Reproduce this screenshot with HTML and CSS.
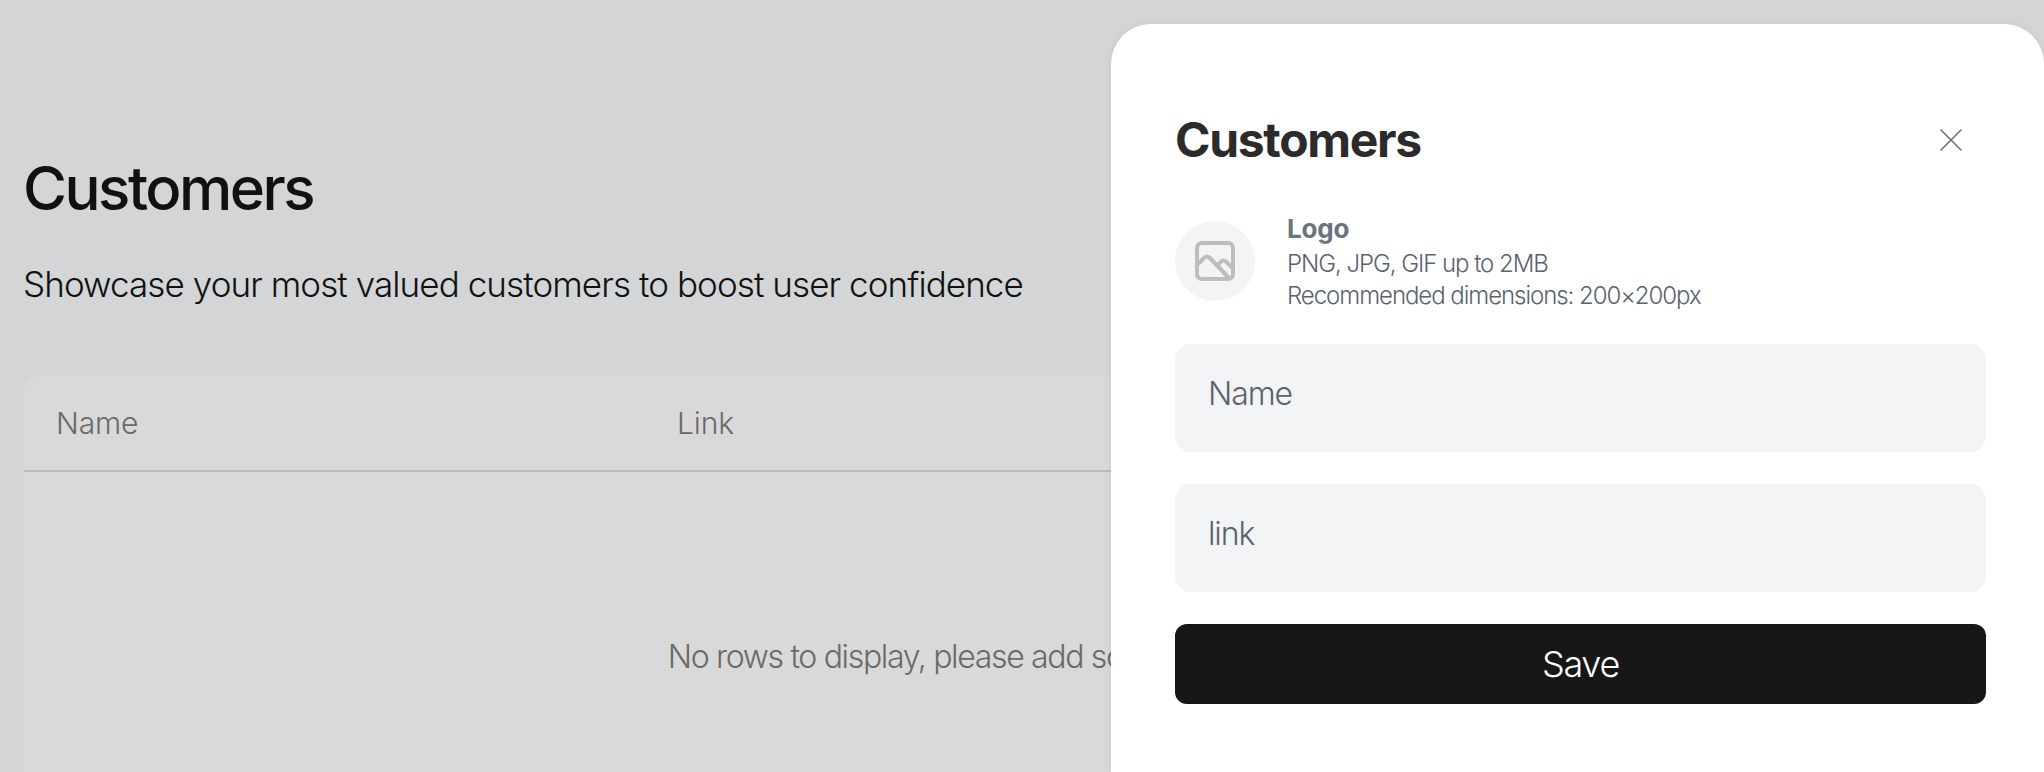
FILE: index.html
```html
<!DOCTYPE html>
<html lang="en">
<head>
    <meta charset="UTF-8">
    <title>Customers</title>
    <link rel="stylesheet" href="styles.css">
</head>
<body>
    <div class="page">
        <h1 class="page-title">Customers</h1>
        <p class="page-subtitle">Showcase your most valued customers to boost user confidence</p>
        <div class="table">
            <div class="table-header">
                <div class="table-col">Name</div>
                <div class="table-col">Link</div>
            </div>
            <div class="table-empty">No rows to display, please add some customers</div>
        </div>
    </div>

    <div class="drawer">
        <div class="drawer-header">
            <h2 class="drawer-title">Customers</h2>
            <button class="close-btn" aria-label="Close">
                <svg width="24" height="24" viewBox="0 0 24 24" fill="none" stroke="#6b6b6b" stroke-width="1.5" stroke-linecap="round">
                    <path d="M2 2l20 20M22 2L2 22"/>
                </svg>
            </button>
        </div>

        <div class="logo-row">
            <div class="logo-circle">
                <svg width="40" height="40" viewBox="0 0 40 40" fill="none" stroke="#bdbdbd" stroke-width="4" stroke-linejoin="round" stroke-linecap="round">
                    <rect x="2" y="2" width="36" height="36" rx="5"/>
                    <path d="M3 23l6.500-6.500q2.500-2 5 0l19 20"/>
                    <path d="M23 24l3-3.500q2.500-2 5 0l7 7"/>
                </svg>
            </div>
            <div class="logo-text">
                <div class="logo-label">Logo</div>
                <div class="logo-hint">PNG, JPG, GIF up to 2MB</div>
                <div class="logo-hint">Recommended dimensions: 200×200px</div>
            </div>
        </div>

        <input class="field" type="text" placeholder="Name">
        <input class="field" type="text" placeholder="link">
        <button class="save-btn">Save</button>
    </div>
</body>
</html>
```

FILE: styles.css
```css
* {
    margin: 0;
    padding: 0;
    box-sizing: border-box;
}

body {
    font-family: 'Inter', 'Liberation Sans', sans-serif;
    background: #d4d5d7;
    height: 100vh;
    overflow: hidden;
}

.page {
    padding: 152px 24px 0;
}

.page-title {
    margin-left: -1px;
    font-size: 60px;
    line-height: 72px;
    font-weight: 500;
    letter-spacing: -2.5px;
    color: #111;
}

.page-subtitle {
    margin-top: 38px;
    margin-left: -1px;
    font-size: 35px;
    line-height: 44px;
    font-weight: 300;
    letter-spacing: -0.92px;
    color: #111;
}

.table {
    margin-top: 70px;
    background: #d9d9d9;
    border-radius: 16px 16px 0 0;
    height: 396px;
}

.table-header {
    display: grid;
    grid-template-columns: 621px 1fr;
    height: 96px;
    padding: 0 32px;
    align-items: center;
    border-bottom: 2px solid #bcbcbc;
}

.table-col {
    font-size: 30px;
    font-weight: 300;
    letter-spacing: -0.15px;
    color: #6a6a6a;
}

.table-empty {
    margin-top: 163px;
    padding-right: 57px;
    text-align: center;
    font-size: 32px;
    line-height: 44px;
    font-weight: 300;
    letter-spacing: -1.33px;
    color: #6a6a6a;
}

.drawer {
    position: absolute;
    top: 24px;
    left: 1111px;
    right: 0;
    bottom: 0;
    background: #fff;
    border-radius: 40px 40px 0 0;
    padding: 86px 58px 0 64px;
    box-shadow: 0 0 10px rgba(0, 0, 0, 0.06);
}

.drawer-header {
    display: flex;
    justify-content: space-between;
    align-items: center;
    height: 60px;
}

.drawer-title {
    font-size: 48px;
    line-height: 60px;
    font-weight: 700;
    letter-spacing: -1.3px;
    color: #2b2b2b;
}

.close-btn {
    display: flex;
    background: none;
    border: none;
    margin-right: 23px;
}

.logo-row {
    display: flex;
    align-items: center;
    gap: 32px;
    margin-top: 39px;
    margin-bottom: 32px;
}

.logo-circle {
    width: 80px;
    height: 80px;
    border-radius: 50%;
    background: #f3f4f6;
    display: flex;
    align-items: center;
    justify-content: center;
}

.logo-label {
    font-size: 26px;
    line-height: 39px;
    font-weight: 700;
    letter-spacing: -0.2px;
    color: #6b7280;
}

.logo-hint {
    font-size: 24px;
    line-height: 32px;
    font-weight: 300;
    letter-spacing: -1.05px;
    color: #5b6270;
}

.field {
    display: block;
    width: 100%;
    height: 108px;
    margin-bottom: 32px;
    padding: 0 33px 9px;
    background: #f3f4f6;
    border: none;
    border-radius: 16px;
    font-family: inherit;
    font-size: 32px;
    font-weight: 300;
    letter-spacing: -1.1px;
}

.field::placeholder {
    color: #5b6270;
    opacity: 1;
}

.save-btn {
    display: block;
    width: 100%;
    height: 80px;
    background: #171717;
    color: #fff;
    border: none;
    border-radius: 12px;
    font-family: inherit;
    font-size: 36px;
    font-weight: 300;
    letter-spacing: -1.3px;
}
```
